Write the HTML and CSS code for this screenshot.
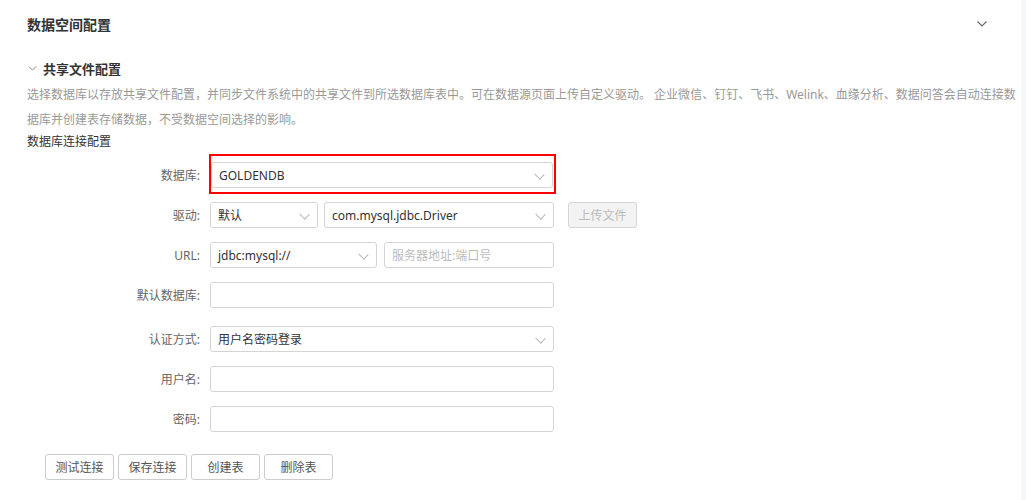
FILE: index.html
```html
<!DOCTYPE html>
<html lang="zh-CN">
<head>
    <meta charset="UTF-8">
    <title>数据空间配置</title>
    <link rel="stylesheet" href="styles.css">
</head>
<body>
<div class="page">
    <div class="main">
        <div class="panel-head">
            <h2>数据空间配置</h2>
            <svg class="chev dark" width="10" height="6" viewBox="0 0 10 6"><path d="M0.5 0.5 L5 5 L9.5 0.5" fill="none" stroke="#666" stroke-width="1.1"/></svg>
        </div>

        <div class="section-head">
            <svg class="chev" width="9" height="5" viewBox="0 0 10 6"><path d="M0.5 0.5 L5 5 L9.5 0.5" fill="none" stroke="#777" stroke-width="1"/></svg>
            <h3>共享文件配置</h3>
        </div>
        <p class="desc">选择数据库以存放共享文件配置，并同步文件系统中的共享文件到所选数据库表中。可在数据源页面上传自定义驱动。 企业微信、钉钉、飞书、Welink、血缘分析、数据问答会自动连接数据库并创建表存储数据，不受数据空间选择的影响。</p>
        <div class="sub-title">数据库连接配置</div>

        <form class="conn-form">
            <div class="form-row">
                <label>数据库:</label>
                <div class="highlight">
                    <div class="select wide">GOLDENDB<i class="arrow"></i></div>
                </div>
            </div>
            <div class="form-row">
                <label>驱动:</label>
                <div class="select small">默认<i class="arrow"></i></div>
                <div class="select driver">com.mysql.jdbc.Driver<i class="arrow"></i></div>
                <button type="button" class="btn upload" disabled>上传文件</button>
            </div>
            <div class="form-row">
                <label>URL:</label>
                <div class="select url">jdbc:mysql://<i class="arrow"></i></div>
                <input type="text" class="input host" placeholder="服务器地址:端口号">
            </div>
            <div class="form-row extra">
                <label>默认数据库:</label>
                <input type="text" class="input wide">
            </div>
            <div class="form-row">
                <label>认证方式:</label>
                <div class="select wide">用户名密码登录<i class="arrow"></i></div>
            </div>
            <div class="form-row">
                <label>用户名:</label>
                <input type="text" class="input wide">
            </div>
            <div class="form-row">
                <label>密码:</label>
                <input type="password" class="input wide">
            </div>
            <div class="form-buttons">
                <button type="button" class="btn">测试连接</button>
                <button type="button" class="btn">保存连接</button>
                <button type="button" class="btn">创建表</button>
                <button type="button" class="btn">删除表</button>
            </div>
        </form>
    </div>
    <div class="scrollbar"></div>
</div>
</body>
</html>
```

FILE: styles.css
```css
body {
    margin: 0;
    font-family: "Noto Sans", "Noto Sans CJK SC", sans-serif;
    font-size: 12px;
    color: #333;
    background: #fff;
}
.page {
    display: flex;
    height: 500px;
    overflow: hidden;
}
.main {
    flex: 1;
    padding: 0 4px 0 27px;
}
.scrollbar {
    width: 5px;
    background-color: #f6f7f9;
}
.panel-head {
    display: flex;
    align-items: center;
    justify-content: space-between;
    height: 47px;
    padding-right: 30px;
}
.panel-head h2 {
    margin: 0;
    font-size: 14px;
    font-weight: bold;
    color: #333;
}
.section-head {
    display: flex;
    align-items: center;
    height: 24px;
    margin-top: 9px;
    margin-bottom: 2px;
}
.section-head .chev {
    margin: 0 6px 0 1px;
}
.section-head h3 {
    margin: 0;
    font-size: 13px;
    font-weight: bold;
    color: #333;
}
.desc {
    margin: 0;
    color: #999;
    line-height: 25px;
}
.sub-title {
    line-height: 20px;
    color: #333;
}
.conn-form {
    padding-top: 10px;
}
.form-row {
    display: flex;
    align-items: center;
    height: 26px;
    margin-bottom: 14px;
}
.form-row.extra {
    margin-bottom: 18px;
}
.form-row label {
    width: 173px;
    margin-right: 10px;
    text-align: right;
    color: #666;
}
.highlight {
    margin: -8px -4px -6px -1px;
    padding: 6px 1px 4px 0;
    border: 2px solid #f00;
}
.select, .input {
    height: 26px;
    box-sizing: border-box;
    border: 1px solid #d4d4d4;
    border-radius: 3px;
    background: #fff;
    font: inherit;
    color: #333;
    padding: 0 7px;
}
.select {
    position: relative;
    display: flex;
    align-items: center;
}
.arrow {
    position: absolute;
    right: 9px;
    top: 8px;
    width: 6px;
    height: 6px;
    border-right: 1px solid #bbb;
    border-bottom: 1px solid #bbb;
    transform: rotate(45deg) scaleX(1.15);
}
.input {
    outline: none;
}
.input::placeholder {
    color: #bbb;
}
.wide {
    width: 344px;
}
.highlight .wide {
    width: 342px;
}
.small {
    width: 108px;
}
.driver {
    width: 230px;
    margin-left: 6px;
}
.url {
    width: 167px;
}
.host {
    width: 170px;
    margin-left: 7px;
}
.btn {
    height: 26px;
    width: 69px;
    padding: 0;
    border: 1px solid #ccc;
    border-radius: 3px;
    background: #fff;
    font: inherit;
    color: #555;
    cursor: pointer;
}
.btn.upload {
    margin-left: 14px;
    background: #f3f3f3;
    border-color: #d6d6d6;
    color: #bbb;
    cursor: default;
}
.form-buttons {
    display: flex;
    gap: 4px;
    margin-top: 22px;
    padding-left: 18px;
}
```
